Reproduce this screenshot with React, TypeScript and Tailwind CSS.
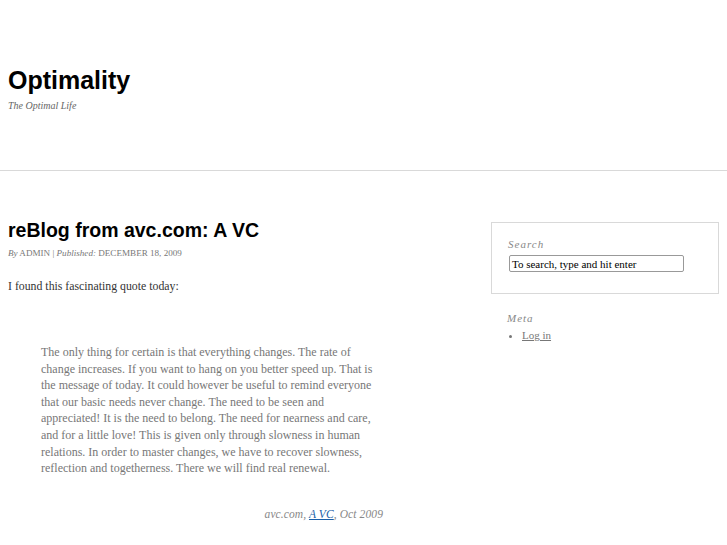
import React from "react";

const serif = { fontFamily: '"Liberation Serif", "Times New Roman", serif' };

export default function App() {
  return (
    <div className="min-h-[545px] bg-white" style={serif}>
      <header className="h-[171px] border-b border-[#d9d9d9] px-[8px] pt-[64px]">
        <h1 className="font-['Liberation_Sans',Arial,sans-serif] text-[25px] font-bold leading-[32px] text-black">
          Optimality
        </h1>
        <p className="mt-[3px] text-[10px] italic leading-[14px] text-[#666]">The Optimal Life</p>
      </header>

      <div className="flex">
        <main className="w-[420px] pl-[8px] pt-[47px]">
          <h2 className="font-['Liberation_Sans',Arial,sans-serif] text-[19.5px] font-bold leading-[24px] text-black">
            reBlog from avc.com: A VC
          </h2>
          <div className="mt-[5px] text-[9.1px] leading-[12px] text-[#777]">
            <span className="italic">By</span> ADMIN | <span className="italic">Published:</span> DECEMBER 18, 2009
          </div>
          <p className="mt-[19px] text-[11.8px] leading-[16px] text-[#333]">I found this fascinating quote today:</p>
          <blockquote className="ml-[33px] mt-[50px] w-[342px] text-[12px] leading-[16.6px] text-[#777]">
            <p>
              The only thing for certain is that everything changes. The rate of change increases. If you want to hang on
              you better speed up. That is the message of today. It could however be useful to remind everyone that our
              basic needs never change. The need to be seen and appreciated! It is the need to belong. The need for
              nearness and care, and for a little love! This is given only through slowness in human relations. In order
              to master changes, we have to recover slowness, reflection and togetherness. There we will find real
              renewal.
            </p>
            <p className="mt-[29px] text-right text-[11.5px] italic tracking-[0.1px] text-[#888]">
              avc.com, <a className="text-[#1a5fa8] underline" href="#">A VC</a>, Oct 2009
            </p>
          </blockquote>
        </main>

        <aside className="ml-[71px] pt-[51px]">
          <div className="h-[72px] w-[228px] border border-[#d9d9d9] px-[16px] pt-[14px]">
            <div className="text-[11px] italic leading-[14px] tracking-[1px] text-[#888]">Search</div>
            <div className="ml-[1px] mt-[4px] flex h-[17px] w-[175px] items-center rounded-[2px] border border-[#999] px-[2px] text-[11px] leading-[14px] text-black">
              To search, type and hit enter
            </div>
          </div>
          <div className="pl-[16px] pt-[17px]">
            <div className="text-[11px] italic leading-[14px] tracking-[1px] text-[#888]">Meta</div>
            <ul className="mt-[2px] list-disc pl-[15px] text-[11px] leading-[16px] text-[#777]">
              <li>
                <a className="underline" href="#">Log in</a>
              </li>
            </ul>
          </div>
        </aside>
      </div>
    </div>
  );
}
